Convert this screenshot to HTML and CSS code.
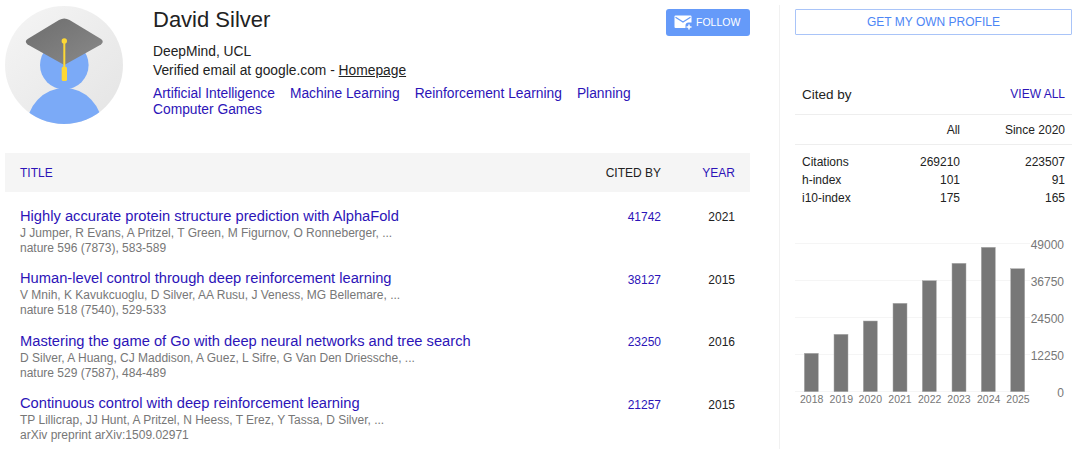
FILE: index.html
```html
<!DOCTYPE html>
<html lang="en">
<head>
<meta charset="utf-8">
<title>David Silver</title>
<link rel="stylesheet" href="styles.css">
</head>
<body>
<div class="page">
  <main class="main">
    <section class="profile">
      <svg class="avatar" viewBox="0 0 118 118" width="118" height="118">
        <defs>
          <linearGradient id="bg" x1="0" y1="0" x2="1" y2="1"><stop offset="0" stop-color="#f5f5f5"/><stop offset="1" stop-color="#e4e4e4"/></linearGradient>
          <linearGradient id="cap" x1="0" y1="0" x2="1" y2="1"><stop offset="0" stop-color="#6d6d6d"/><stop offset="1" stop-color="#8a8a8a"/></linearGradient>
          <clipPath id="circ"><circle cx="59" cy="59" r="59"/></clipPath>
        </defs>
        <circle cx="59" cy="59" r="59" fill="url(#bg)"/>
        <g clip-path="url(#circ)" fill="#7baaf7">
          <circle cx="59.300" cy="59" r="24.300"/>
          <ellipse cx="59.500" cy="122" rx="38" ry="40"/>
        </g>
        <path d="M54 14Q59.300 11 64.500 14L96 33Q99.500 35.700 96 38.500L59.300 59L22.600 38.500Q19 35.700 22.600 33Z" fill="url(#cap)"/>
        <rect x="58.300" y="36" width="2" height="26" fill="#fdd835"/>
        <circle cx="59.300" cy="35" r="2.700" fill="#fdd835"/>
        <rect x="56.700" y="60.700" width="5.300" height="14.300" rx="1.500" fill="#fdd835"/>
      </svg>
      <div class="info">
        <div class="name-row">
          <h1 class="name">David Silver</h1>
          <button class="follow">
            <svg class="mail" viewBox="0 0 18 15" width="18" height="15"><path d="M0.500 1.500Q0.500 0.500 1.500 0.500H16.500Q17.500 0.500 17.500 1.500V7.500H15A3 3 0 0 0 11.500 11V13H1.500Q0.500 13 0.500 12Z" fill="#fff"/><path d="M1.500 2.200L9 7L16.500 2.200" fill="none" stroke="#659af9" stroke-width="1.300"/><path d="M15 9.500V14.500M12.500 12H17.500" stroke="#fff" stroke-width="1.500"/></svg>
            FOLLOW
          </button>
        </div>
        <div class="line aff">DeepMind, UCL</div>
        <div class="line">Verified email at google.com - <a class="home" href="#">Homepage</a></div>
        <div class="topics">
          <a href="#">Artificial Intelligence</a><a href="#">Machine Learning</a><a href="#">Reinforcement Learning</a><a href="#">Planning</a><a href="#">Computer Games</a>
        </div>
      </div>
    </section>

    <section class="table">
      <div class="thead">
        <a class="c-title link" href="#">TITLE</a>
        <span class="c-cited">CITED BY</span>
        <a class="c-year link" href="#">YEAR</a>
      </div>
      <article class="row">
        <div class="c-title"><a class="ptitle" href="#">Highly accurate protein structure prediction with AlphaFold</a><div class="meta">J Jumper, R Evans, A Pritzel, T Green, M Figurnov, O Ronneberger, ...</div><div class="meta">nature 596 (7873), 583-589</div></div>
        <a class="c-cited num" href="#">41742</a><span class="c-year yr">2021</span>
      </article>
      <article class="row">
        <div class="c-title"><a class="ptitle" href="#">Human-level control through deep reinforcement learning</a><div class="meta">V Mnih, K Kavukcuoglu, D Silver, AA Rusu, J Veness, MG Bellemare, ...</div><div class="meta">nature 518 (7540), 529-533</div></div>
        <a class="c-cited num" href="#">38127</a><span class="c-year yr">2015</span>
      </article>
      <article class="row">
        <div class="c-title"><a class="ptitle" href="#">Mastering the game of Go with deep neural networks and tree search</a><div class="meta">D Silver, A Huang, CJ Maddison, A Guez, L Sifre, G Van Den Driessche, ...</div><div class="meta">nature 529 (7587), 484-489</div></div>
        <a class="c-cited num" href="#">23250</a><span class="c-year yr">2016</span>
      </article>
      <article class="row">
        <div class="c-title"><a class="ptitle" href="#">Continuous control with deep reinforcement learning</a><div class="meta">TP Lillicrap, JJ Hunt, A Pritzel, N Heess, T Erez, Y Tassa, D Silver, ...</div><div class="meta">arXiv preprint arXiv:1509.02971</div></div>
        <a class="c-cited num" href="#">21257</a><span class="c-year yr">2015</span>
      </article>
    </section>
  </main>

  <aside class="side">
    <button class="own">GET MY OWN PROFILE</button>
    <div class="cited-head"><span>Cited by</span><a class="viewall" href="#">VIEW ALL</a></div>
    <div class="stats-head"><span></span><span>All</span><span>Since 2020</span></div>
    <div class="stats">
      <span>Citations</span><span>269210</span><span>223507</span>
      <span>h-index</span><span>101</span><span>91</span>
      <span>i10-index</span><span>175</span><span>165</span>
    </div>
    <svg class="chart" viewBox="0 0 285 175" width="285" height="175">
      <g class="grid">
        <line x1="0" x2="235" y1="8.500" y2="8.500"/><line x1="0" x2="235" y1="45.500" y2="45.500"/><line x1="0" x2="235" y1="82.500" y2="82.500"/><line x1="0" x2="235" y1="119.500" y2="119.500"/><line x1="0" x2="235" y1="156.500" y2="156.500"/>
      </g>
      <g class="bars">
        <rect x="9.300" y="118.300" width="14" height="38.400"/>
        <rect x="39" y="99.300" width="14" height="57.400"/>
        <rect x="68.300" y="86" width="14" height="70.700"/>
        <rect x="98" y="68.300" width="14" height="88.400"/>
        <rect x="127.300" y="45.700" width="14" height="111"/>
        <rect x="157" y="28.300" width="14" height="128.400"/>
        <rect x="186.300" y="12.300" width="14" height="144.400"/>
        <rect x="215.700" y="33.700" width="14" height="123"/>
      </g>
      <g class="xl">
        <text x="16.700" y="168">2018</text><text x="46.300" y="168">2019</text><text x="75.300" y="168">2020</text><text x="105" y="168">2021</text><text x="134.700" y="168">2022</text><text x="164" y="168">2023</text><text x="193.700" y="168">2024</text><text x="223" y="168">2025</text>
      </g>
      <g class="yl">
        <text x="269" y="13.500">49000</text><text x="269" y="50.500">36750</text><text x="269" y="87.500">24500</text><text x="269" y="124.500">12250</text><text x="269" y="161.500">0</text>
      </g>
    </svg>
  </aside>
</div>
</body>
</html>
```
FILE: styles.css
```css
* { box-sizing: border-box; }
html, body { margin: 0; padding: 0; background: #fff; height: 449px; overflow: hidden; }
body { font-family: "Liberation Sans", Arial, sans-serif; color: #222; font-size: 13px; }
a { color: #2c14b8; text-decoration: none; }
.page { display: flex; height: 449px; }
.main { width: 745px; margin-left: 5px; flex: none; margin-right: 29px; }
.profile { display: flex; height: 153px; }
.avatar { flex: none; margin-top: 6px; }
.info { flex: 1; margin-left: 30px; min-width: 0; }
.name-row { display: flex; justify-content: space-between; align-items: flex-start; padding-top: 6px; height: 42px; }
.name { margin: 0; font-size: 22px; font-weight: 400; line-height: 28px; }
.follow { display: flex; align-items: center; gap: 4px; width: 84px; height: 27px; margin-top: 3px; padding: 0 0 1px 8px; border: 0; border-radius: 3px; background: #659af9; color: #fff; font: 10.500px "Liberation Sans", Arial, sans-serif; }
.line { font-size: 13.800px; line-height: 19px; }
.home { color: #222; text-decoration: underline; }
.topics { width: 520px; margin-top: 6px; font-size: 13.800px; line-height: 16px; display: flex; flex-wrap: wrap; column-gap: 15px; }
.table { width: 745px; }
.thead { display: flex; align-items: center; height: 39px; padding: 1px 15px 0; background: #f5f5f5; font-size: 12px; }
.link { color: #2c14b8; }
.c-title { flex: 1; min-width: 0; }
.c-cited { width: 80px; text-align: right; }
.c-year { width: 74px; text-align: right; }
.row { display: flex; align-items: flex-start; height: 62.670px; padding: 0 15px; }
.thead + .row { margin-top: 14.500px; }
.ptitle { display: block; font-size: 14.700px; line-height: 19px; }
.meta { color: #777; font-size: 12px; line-height: 15px; }
.num, .yr { padding-top: 1.500px; font-size: 12px; line-height: 18px; }
.yr { color: #222; }
.side { width: 293px; flex: none; margin-top: 5px; padding: 9px 0 0 15px; border-left: 1px solid #f1f1f1; }
.own { display: block; width: 277px; height: 26px; margin-top: -5px; background: #fff; border: 1px solid #a9c4f8; border-radius: 1px; color: #4d86f5; font: 12px "Liberation Sans", Arial, sans-serif; }
.cited-head { display: flex; justify-content: space-between; align-items: center; width: 277px; height: 39px; margin-top: 41px; padding: 0 7px 2px; border-bottom: 1px solid #eee; font-size: 13.500px; }
.viewall { font-size: 12px; }
.stats-head, .stats { display: grid; grid-template-columns: 72px 86px 105px; width: 277px; padding: 0 7px; font-size: 12px; }
.stats-head { height: 30px; align-items: center; border-bottom: 1px solid #eee; }
.stats-head span:nth-child(n+2), .stats span:nth-child(3n+2), .stats span:nth-child(3n) { text-align: right; }
.stats { padding-top: 7.500px; line-height: 18.400px; }
.chart { display: block; margin-top: 27.500px; }
.grid line { stroke: #f5f5f5; stroke-width: 1; }
.bars rect { fill: #777; stroke: #aaa; stroke-width: 0.500; }
.xl text { font: 10.500px "Liberation Sans", Arial, sans-serif; fill: #777; text-anchor: middle; }
.yl text { font: 12px "Liberation Sans", Arial, sans-serif; fill: #777; text-anchor: end; }
```
